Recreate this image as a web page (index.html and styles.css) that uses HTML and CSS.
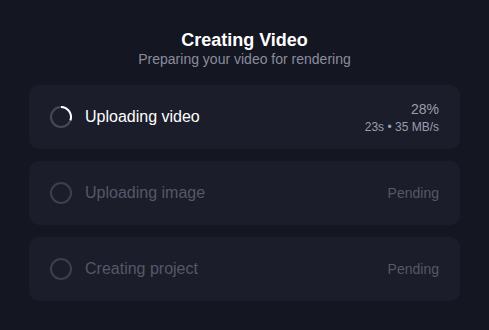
FILE: index.html
```html
<!DOCTYPE html>
<html lang="en">
<head>
    <meta charset="UTF-8">
    <title>Creating Video</title>
    <link rel="stylesheet" href="styles.css">
</head>
<body>

<div class="panel">
    <div class="header">
        <h2>Creating Video</h2>
        <p>Preparing your video for rendering</p>
    </div>

    <div class="steps">
        <div class="step active">
            <svg class="spinner" width="22" height="22" viewBox="0 0 22 22">
                <circle cx="11" cy="11" r="10" fill="none" stroke="#464957" stroke-width="2"/>
                <path d="M11 1 A10 10 0 0 1 20.4 14.4" fill="none" stroke="#ffffff" stroke-width="2"/>
            </svg>
            <div class="step-label">Uploading video</div>
            <div class="step-status">
                <div class="percent">28%</div>
                <div class="meta">23s • 35 MB/s</div>
            </div>
        </div>
        <div class="step pending">
            <span class="ring"></span>
            <div class="step-label">Uploading image</div>
            <div class="step-status">Pending</div>
        </div>
        <div class="step pending">
            <span class="ring"></span>
            <div class="step-label">Creating project</div>
            <div class="step-status">Pending</div>
        </div>
    </div>
</div>

</body>
</html>
```

FILE: styles.css
```css
body {
    margin: 0;
    background-color: #141622;
    font-family: "Liberation Sans", Arial, sans-serif;
    color: #ffffff;
}

.panel {
    padding: 29px 29px 0 29px;
}

.header {
    text-align: center;
}

.header h2 {
    margin: 0;
    font-size: 18px;
    font-weight: bold;
    line-height: 22px;
}

.header p {
    margin: 0;
    font-size: 14px;
    line-height: 17px;
    color: #8a8d9d;
}

.steps {
    display: flex;
    flex-direction: column;
    gap: 12px;
    margin-top: 17px;
}

.step {
    height: 64px;
    display: flex;
    align-items: center;
    padding: 0 21px;
    background-color: #1b1d2a;
    border-radius: 10px;
}

.spinner, .ring {
    flex-shrink: 0;
    width: 22px;
    height: 22px;
}

.ring {
    box-sizing: border-box;
    border: 2px solid #3c3f4d;
    border-radius: 50%;
}

.step-label {
    flex: 1;
    margin-left: 13px;
    font-size: 16px;
}

.step-status {
    text-align: right;
    font-size: 14px;
    color: #9a9dad;
}

.percent {
    font-size: 14px;
    line-height: 18px;
}

.meta {
    font-size: 12px;
    line-height: 16px;
    margin-top: 1px;
}

.pending .step-label {
    color: #555868;
}

.pending .step-status {
    color: #555868;
}
```
